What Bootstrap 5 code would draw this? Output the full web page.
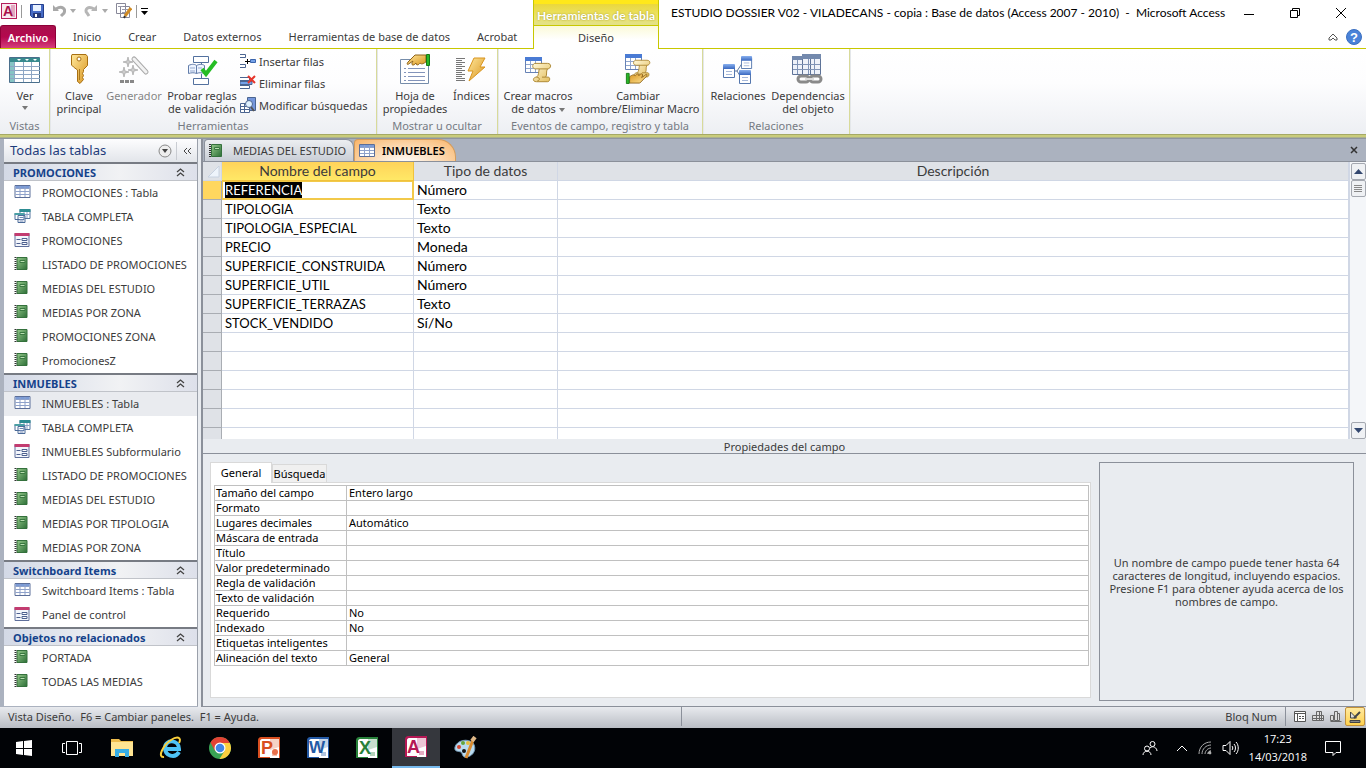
<!DOCTYPE html>
<html lang="es">
<head>
<meta charset="utf-8">
<meta name="viewport" content="width=device-width, initial-scale=1">
<title>ESTUDIO DOSSIER V02 - VILADECANS - Microsoft Access</title>
<link href="https://cdn.jsdelivr.net/npm/bootstrap@5.3.0/dist/css/bootstrap.min.css" rel="stylesheet">
<style>
:root{--olive:#c8c800;--edge:#8b909a;--cell:#d0d7e5;--blue:#1e3c7b;--ui:"Noto Sans","Open Sans",sans-serif;--grid:"Lato","Noto Sans",sans-serif}
body{font-family:var(--ui);font-size:11px;line-height:13px;color:#3b3b3b;height:100vh;overflow:hidden;background:#fff}
button{font:inherit;color:inherit;background:none;border:0;padding:0}
svg{display:block;flex:none}
.app-head{background:#fff;height:49px}
.head-left{width:533px}
.qat{height:25px;padding:0 0 3px 1px}
.sep{width:1px;height:13px;background:#999}
.tabs-row{height:23px}
.main-tabs{gap:27px}
.file-tab{width:56px;margin-right:-10px;height:23px;color:#fff;font-weight:600;background:linear-gradient(#a8104c,#b4084e 50%,#d63f7c);border:1px solid #8d0038;border-bottom:0;border-radius:3px 3px 0 0}
.rule{height:1px;background:var(--olive)}
.ctx{width:126px;border:solid var(--olive);border-width:0 1px}
.ctx-title{height:26px;padding-top:5px;border-top:4px solid #ffe81a;border-bottom:1px solid var(--olive);background:linear-gradient(#ead73c,#ece46a 60%,#e2e08a);color:#fff;font-family:Lato,sans-serif;font-size:12px;font-weight:700;text-shadow:0 0 2px #998f20}
.ctx-tab{height:23px;background:linear-gradient(#fbfad8,#fff 60%)}
.win-title{font-family:Lato,"Noto Sans",sans-serif;font-size:12px;color:#000;padding-left:12px}
.win-controls{gap:34px;padding-right:19px}
.ribbon{height:85px;background:linear-gradient(#fff,#fdfdfe 40%,#edeff3)}
.rgroup{border-right:1px solid #d8da9a;box-shadow:1px 0 #e4e7ea;height:85px}
.rgroup-name{color:#757a83;padding-top:2px}
.g-views{width:50px}.g-tools{width:327px}.g-show{width:121px}.g-events{width:205px}.g-rel{width:147px}
.big{height:68px;padding-top:4px;gap:4px;width:var(--w);white-space:nowrap}
.w50{--w:50px}.w55{--w:60px}.w70{--w:70px}.w76{--w:76px}.w80{--w:80px}.w120{--w:120px}
.small-btns{padding:1px 0 0}
.small-btns button{height:22px;gap:3px;white-space:nowrap}
.ribbon-end{height:5px;background:linear-gradient(#a5a965 0 1px,#c9cc7b 1px 3px,#8f96a0 4px)}
.main-area{background:#abb2bf;padding-left:4px;min-height:0}
.work{min-width:0}
.side{width:194px;background:#fff;border-right:1px solid #9aa0aa;margin-bottom:1px}
.side-head{height:23px;font-size:13px;color:var(--blue);background:linear-gradient(#fdfdfe,#e2e5ea);padding-left:6px}
.side-head .vsep{width:1px;height:18px;background:#c9ccd2}
.side-head .fold{width:20px}
.side h2{height:19px;margin:0;padding:0 12px 0 9px;font-size:11px;font-weight:700;line-height:15px;color:#15428b;background:linear-gradient(90deg,#d3d9e6,#f1f2f4 60%,#dde0ea);border-top:2px solid #777b83;border-bottom:1px solid #c0c3c9}
.side a{height:24px;color:#3b3b3b;text-decoration:none;padding:0 0 2px 10px;gap:11px}
.side a.on{background:#e9ebef}
.split{width:5px;background:#e9ecf0;border-right:2px solid var(--edge)}
.doc-tabs{height:23px;border-bottom:1px solid var(--edge);padding:0 8px 0 1px}
.doc-tab{height:22px;background:linear-gradient(#eceef1,#c9ced6);border:1px solid #8c929d;border-bottom:0;border-radius:4px 8px 0 0;padding:0 9px 0 4px;gap:8px;width:150px}
.doc-tab.on{width:102px;height:22px;background:radial-gradient(ellipse at 50% 110%,#fff,#fbd3a5 60%,#f9b468);border-color:#d59c5a;border-radius:4px 18px 0 0;font-weight:600;color:#000;gap:7px;padding-right:5px}
.grid-pane{min-height:0;overflow:hidden;background:#fff}
.design{table-layout:fixed;width:100%;font-family:var(--grid);font-size:14px;line-height:16px;color:#000;border-collapse:separate;border-spacing:0}
.design td:nth-child(2){font-size:13px}
.design th,.design td{height:19px;padding:0 3px;border-right:1px solid var(--cell);border-bottom:1px solid var(--cell);white-space:nowrap}
.design thead th{font-weight:400;text-align:center;color:#3b3b3b;background:#dfe2e7}
.design thead th.hot{background:linear-gradient(#ffd35a,#ffe866);border-color:#f0c23c}
.design tbody th{background:#dfe2e7;border-color:#a9adb3}
.design tbody th.hot{background:#ffd75f}
.design td.cur{box-shadow:inset 0 0 0 1px #f2c94a;border-color:#f2c94a}
.design td.cur span{background:#000;color:#fff}
.c-sel{width:19px}.c-name{width:192px}.c-type{width:144px}
.scroll{width:17px;background:#f4f6f9;border-left:1px solid var(--cell);padding-top:1px}
.scroll button{height:17px;width:15px;background:#eff1f4;border:1px solid #a4a8b0;border-radius:2px}
.props{background:#e9ecf0;border-bottom:1px solid var(--edge)}
.props-title{height:15px;line-height:15px;border-bottom:1px solid var(--edge)}
.props-body{padding:8px 12px 5px 7px;gap:8px;color:#000}
.ptabs button{background:#f0f0f0;border:1px solid #d9d9d9;border-bottom:0;height:18px;width:55px}
.ptabs .on{background:#fff;height:21px;width:62px;margin-bottom:-1px;z-index:1;padding-bottom:2px}
.page{border:1px solid #d9d9d9;background:#fff;padding:2px 1px 31px 3px;margin-bottom:3px}
.ptable{width:100%;table-layout:fixed;border-collapse:collapse;line-height:13px}
.ptable th,.ptable td{height:15px;padding:0 2px 1px;border:1px solid #c0c0c0;font-weight:400}
.ptable th{width:132px;padding-left:1px;white-space:nowrap}
.help{width:255px;border:1px solid var(--edge);padding:0 7px;color:#3b3b3b}
.status{height:21px;background:linear-gradient(#e8eaee,#b9bdc4);padding:0 1px 2px 8px}
.status .half{width:calc(50% - 6px)}
.status .vsep{width:1px;height:19px;background:#8b909a}
.views{gap:6px;padding-left:8px}
.views .on{width:20px;height:19px;margin-left:-3px;border:1px solid #c2913a;border-radius:2px;background:linear-gradient(#ffe9a0,#ffd24e)}
.taskbar{height:40px;background:#010306;color:#fff;font-size:11px}
.taskbar button{width:48px;height:40px}
.apps{gap:1px;margin-left:2px}
.apps .on{background:#35373d;border-bottom:2px solid #76b9ed}
.tray{gap:10px;padding-right:9px}
.tray .clock{font-family:"Open Sans","Noto Sans",sans-serif;line-height:18px;margin-right:-8px}
.logo-text{font-family:"Liberation Sans",sans-serif;font-weight:700}
</style>
</head>
<body class="d-flex flex-column">
<svg width="0" height="0" class="position-absolute" aria-hidden="true">
<defs>
<linearGradient id="gr" x1="0" y1="0" x2="1" y2="1"><stop stop-color="#94c98a"/><stop offset="1" stop-color="#2c6e36"/></linearGradient>
<linearGradient id="gold" x1="0" y1="0" x2="1" y2="1"><stop stop-color="#ffe79a"/><stop offset="1" stop-color="#d99520"/></linearGradient>
<linearGradient id="paper" x1="0" y1="0" x2="1" y2="1"><stop stop-color="#fff8d8"/><stop offset="1" stop-color="#e3bd5c"/></linearGradient>
<linearGradient id="blu" x1="0" y1="0" x2="0" y2="1"><stop stop-color="#88b0ee"/><stop offset="1" stop-color="#3a68c0"/></linearGradient>
<symbol id="i-table" viewBox="0 0 16 16"><path fill="#fff" stroke="#5b6e99" d="M.5 1.500h15v12H.5z"/><path fill="#7b9bd6" d="M1 2h14v2H1z"/><path stroke="#8fa2cb" d="M1 4.500h14M1 7.500h14M1 10.500h14M5.500 2v11M10.500 2v11"/></symbol>
<symbol id="i-query" viewBox="0 0 16 16"><path fill="#fff" stroke="#5577a0" d="M5.500 1.500h10v9h-10z"/><path fill="#2d8c92" d="M5 1h11v3H5z"/><path stroke="#8ba1c6" d="M6 6.500h9M9.500 4v5M12.500 4v6"/><path fill="#fff" stroke="#4a6a98" d="M.5 5.500h9v6h-9zM3.500 7.500h7v7h-7z"/><path fill="#4ba0a5" d="M0 5h10v2H0z"/><path stroke="#6c86b4" d="M5 9.500h4M5 11.500h4M5 13h4"/></symbol>
<symbol id="i-form" viewBox="0 0 16 16"><path fill="#f3f6fc" stroke="#5f6f9b" d="M.5 1.500h14v13H.5z"/><path fill="#c33c70" d="M0 1h15v3H0z"/><path fill="#fff" stroke="#4d608f" d="M7.500 6.500h5v2h-5zM7.500 10.500h5v2h-5zM2 7.500h4M2 11.500h4"/></symbol>
<symbol id="i-report" viewBox="0 0 16 16"><path fill="url(#gr)" stroke="#34713c" d="M2.500 1.500h10v12h-10z"/><path fill="#b8deb0" stroke="#397840" d="M5.500 4.500h5v2h-5z"/><path stroke="#333" stroke-width="2" stroke-dasharray="1 1" d="M1 1v13"/></symbol>
<symbol id="i-up" viewBox="0 0 9 9"><path fill="none" stroke="#444" stroke-width="1.300" d="M1 4l3.500-3L8 4M1 8l3.500-3L8 8"/></symbol>
<symbol id="i-key" viewBox="0 0 32 32"><path fill="url(#gold)" stroke="#a86f12" d="M9 1.500h14l1.500 2v9l-4 4v2l-1 2 1 2-1 2 1 2-3.500 4-2.500-2V17l-4-3-2-2V3z"/><circle cx="16" cy="6" r="2" fill="#fff" stroke="#a86f12"/><path stroke="#a87820" d="M16.500 16v11"/></symbol>
<symbol id="i-scroll" viewBox="0 0 22 24"><path fill="url(#paper)" stroke="#a8822c" d="M3 1.500h14c5 0 4 6 0 6-2 3 0 6-2 9h3c2 0 2 5-1 5H5c-5 0-4-5 0-5 3-2 2-6 3-9H4c-4 0-4-5-1-6z"/><path fill="none" stroke="#a8822c" d="M8 7.500h9M5 16.500c4 0 4 4 1 4M15 16.500h-4"/></symbol>
<symbol id="i-mini" viewBox="0 0 18 17"><path fill="#fff" stroke="#6681b5" d="M.5.500h16v15H.500z"/><path fill="#4a7bd4" d="M0 0h17v4H0z"/><path stroke="#91a7cf" d="M1 7.500h15M1 11.500h15M5.500 4v11M10.500 4v11"/></symbol>
<symbol id="i-db" viewBox="0 0 13 14"><path fill="#fff" stroke="#5476ad" d="M.5 2.500h11v11H.500z"/><rect width="12" height="5" rx="1" fill="url(#blu)"/><path stroke="#a6b8d9" d="M3 7.500h6M3 10.500h6"/></symbol>
<symbol id="i-hand" viewBox="0 0 24 13"><path fill="url(#gold)" stroke="#8f641b" d="M20 1H9L2 8c-2 3 0 3 2 1l3-2c-3 5 1 5 3 2 0 3 3 2 4 0 2 2 4 0 6-1z"/><path fill="#29b829" stroke="#167b16" d="M20.500.500h3v11h-3z"/></symbol>
<symbol id="i-page" viewBox="0 0 22 22"><path fill="currentColor" d="M4 0h18v21H0V4c0-3 1-4 4-4z"/><path fill="#fff" d="M4 2h17v18H2V4c0-1 1-2 2-2z"/><path fill="currentColor" fill-opacity=".25" d="M12 2h9v18h-9z"/><path fill="#fff" d="M12 13l9-3v11h-9z"/><path stroke="currentColor" stroke-width=".7" d="M14 16h5M14 18h5"/></symbol>
</defs>
</svg>

<header class="app-head d-flex flex-shrink-0">
 <div class="head-left flex-shrink-0">
  <div class="qat d-flex align-items-center">
   <svg width="16" height="16" viewBox="0 0 16 16"><rect x=".5" y=".5" width="15" height="15" fill="#f8e8ef" stroke="#b51e5b"/><rect x="10" y="2" width="4" height="12" fill="#e3a9c0"/><text class="logo-text" x="2" y="13" font-size="14" fill="#a80f4b">A</text></svg>
   <span class="sep ms-1 me-2"></span>
   <button aria-label="Guardar"><svg width="14" height="14" viewBox="0 0 14 14"><path fill="#476bc4" stroke="#243f8d" d="M.500.500h13v13h-11l-2-2z"/><path fill="#e9f2ff" d="M3 1h8v6H3z"/><path fill="#263977" d="M3 9h8v5H3z"/><path fill="#fff" d="M5 10h2v3H5z"/></svg></button>
   <button class="ms-2" aria-label="Deshacer"><svg width="14" height="14" viewBox="0 0 14 14" fill="none" stroke="#a8a8a8" stroke-width="3"><path d="M4 5c6-4 10 0 8 4l-3 3"/><path d="M1 1v6h6z" fill="#a8a8a8" stroke="none"/></svg></button>
   <svg class="ms-1" width="6" height="4"><path fill="#aaa" d="M0 0h6L3 4z"/></svg>
   <button class="ms-2" aria-label="Rehacer"><svg width="14" height="14" viewBox="0 0 14 14" fill="none" stroke="#b6b6b6" stroke-width="3"><path d="M10 5C4 1 0 6 3 9l2 3"/><path d="M13 1v6H7z" fill="#b6b6b6" stroke="none"/></svg></button>
   <svg class="ms-1" width="6" height="4"><path fill="#aaa" d="M0 0h6L3 4z"/></svg>
   <button class="ms-2" aria-label="Propiedades"><svg width="16" height="16" viewBox="0 0 16 16"><path fill="#fff" stroke="#889" d="M.500.500h9v10h-9zM4.500 3.500h9v11h-9z"/><path stroke="#99a" d="M2 3.500h5M6 6.500h6M6 9.500h5"/><path stroke="#cf8a23" stroke-width="3" d="M15 5l-6 8"/><path stroke="#333" stroke-width="2" d="M9 13l-1 2"/></svg></button>
   <span class="sep ms-1 me-1"></span>
   <svg width="8" height="8"><path d="M0 1h7v1H0zM0 4h7L3.500 8z"/></svg>
  </div>
  <nav class="tabs-row main-tabs d-flex align-items-center">
   <button class="file-tab">Archivo</button><button>Inicio</button><button>Crear</button><button>Datos externos</button><button>Herramientas de base de datos</button><button>Acrobat</button>
  </nav>
  <div class="rule"></div>
 </div>
 <div class="ctx flex-shrink-0 text-center">
  <div class="ctx-title text-nowrap">Herramientas de tabla</div>
  <button class="ctx-tab w-100">Diseño</button>
 </div>
 <div class="flex-grow-1">
  <div class="d-flex align-items-center justify-content-between qat p-0">
   <div class="win-title text-nowrap">ESTUDIO DOSSIER V02 - VILADECANS - copia : Base de datos (Access 2007 - 2010) &nbsp;-&nbsp; Microsoft Access</div>
   <div class="win-controls d-flex align-items-center">
    <button aria-label="Minimizar"><svg width="12" height="12"><path stroke="#000" d="M1 7.500h10"/></svg></button>
    <button aria-label="Restaurar"><svg width="12" height="12" fill="none" stroke="#000"><path d="M1.500 3.500h7v7h-7zM3.500 3V1.500h7v7H9"/></svg></button>
    <button aria-label="Cerrar"><svg width="12" height="12" stroke="#000"><path d="M1 1l10 10M11 1L1 11"/></svg></button>
   </div>
  </div>
  <div class="tabs-row d-flex justify-content-end align-items-center gap-2 pe-1">
   <button aria-label="Minimizar la cinta"><svg width="10" height="8" fill="#fff" stroke="#555"><path d="M1 5l4-4 4 4v2H7L5 5 3 7H1z"/></svg></button>
   <button aria-label="Ayuda"><svg width="16" height="16"><circle cx="8" cy="8" r="7.500" fill="#4a82d8" stroke="#3b70c0"/><text class="logo-text" x="4" y="13" font-size="13" fill="#fff">?</text></svg></button>
  </div>
  <div class="rule"></div>
 </div>
</header>

<section class="ribbon d-flex flex-shrink-0" aria-label="Diseño">
 <div class="rgroup g-views">
  <button class="big w50 d-flex flex-column align-items-center"><svg width="32" height="32" viewBox="0 0 32 32"><path fill="#fff" stroke="#4a6f8c" d="M.5 4.500h30v25H.500z"/><path fill="#398b8e" d="M1 5h30v4H1z"/><path fill="#86c4c4" d="M1 9h4v20H1z"/><path fill="#fff" d="M8 6h4l-2 2zM16 6h4l-2 2zM24 6h4l-2 2z"/><path stroke="#8ea6c4" d="M1 13.500h30M1 17.500h30M1 21.500h30M1 25.500h30M5.500 9v20M14.500 9v20M22.500 9v20"/></svg><span>Ver</span><svg width="6" height="4"><path fill="#777" d="M0 0h6L3 4z"/></svg></button>
  <div class="rgroup-name text-center">Vistas</div>
 </div>
 <div class="rgroup g-tools">
  <div class="d-flex ps-1">
   <button class="big w50 d-flex flex-column align-items-center"><svg width="32" height="32"><use href="#i-key"/></svg><span>Clave<br>principal</span></button>
   <button class="big w55 d-flex flex-column align-items-center text-black-50" disabled><svg width="32" height="32" viewBox="0 0 32 32"><path stroke="#aaa" stroke-width="5" stroke-linecap="round" d="M16 6l12 13"/><path stroke="#f2f2f2" stroke-width="3" stroke-linecap="round" d="M16 6l12 13"/><path fill="#ccc" stroke="#999" stroke-width=".6" d="M10 4l1 4 4 1-4 1-1 4-1-4-4-1 4-1zM6 14l1 4 4 1-4 1-1 4-1-4-4-1 4-1zM15 12l1 4 4 1-4 1-1 4-1-4-4-1 4-1z"/><path stroke="#888" stroke-width="3" stroke-dasharray="4 1" d="M2 28.500h14"/></svg><span>Generador</span></button>
   <button class="big w76 d-flex flex-column align-items-center"><svg width="32" height="32" viewBox="0 0 32 32"><path fill="#fff" stroke="#53719f" d="M7.500 3.500h15v6h-15zM7.500 25.500h15v6h-15zM15.500 10v2M15.500 21v4"/><path fill="#eef4ff" stroke="#627daa" d="M2.500 12.500c4-2 7-1 8 0 2-1 5-2 8 0v8c-3-1-6-1-8 0-2-1-5-1-8 0zM10.500 12.500v8"/><path stroke="#96abcf" d="M4 15h5M4 18h5M12 15h4"/><path fill="none" stroke="#25bd24" stroke-width="4" d="M16 16l4 5L30 8"/></svg><span>Probar reglas<br>de validación</span></button>
   <div class="small-btns d-flex flex-column">
    <button class="d-flex align-items-center"><svg width="16" height="16" fill="#fff" stroke="#4b6591"><path d="M0 1.500h5.500v3H0M0 11.500h5.500v3H0"/><path stroke="#000" d="M5 8.500h5M7.500 6v5"/><path fill="#75a2e8" stroke="#3b65ac" d="M10.500 6.500h5v3h-5z"/></svg>Insertar filas</button>
    <button class="d-flex align-items-center"><svg width="16" height="16" fill="#fff" stroke="#4b6591"><path d="M0 2.500h9.500v3H0M0 10.500h9.500v3H0"/><path fill="#75a2e8" d="M0 6.500h12v3H0z"/><path stroke="#e6352b" stroke-width="2" d="M8 1l7 7M15 1L8 8"/></svg>Eliminar filas</button>
    <button class="d-flex align-items-center"><svg width="16" height="16" fill="#fff" stroke="#4b6591"><path fill="#7597dc" d="M7.500.500h8v13h-8z"/><path d="M.500 6.500h9v9h-9zM1 9.500h8M1 12.500h8M4.500 7v8"/><circle cx="9" cy="7" r="3.500" fill="#dff1ff"/><path stroke="#555" stroke-width="2" d="M11 10l3 4"/></svg>Modificar búsquedas</button>
   </div>
  </div>
  <div class="rgroup-name text-center">Herramientas</div>
 </div>
 <div class="rgroup g-show">
  <div class="d-flex">
   <button class="big w76 d-flex flex-column align-items-center"><svg width="32" height="32" viewBox="0 0 32 32"><path fill="#fff" stroke="#758caa" d="M1.500 6.500h28v24h-28z"/><path stroke="#8394ba" stroke-dasharray="2 2 20 9" d="M5 15.500h21M5 19.500h21M5 23.500h21M5 27.500h21"/><use href="#i-hand" x="7" y="1" width="24" height="13"/></svg><span>Hoja de<br>propiedades</span></button>
   <button class="big d-flex flex-column align-items-center"><svg width="32" height="32" viewBox="0 0 32 32"><path stroke="#777" d="M1 5.500h9M1 7.500h6M1 9.500h9M1 11.500h6M1 13.500h9M1 15.500h6M1 17.500h9M1 19.500h6M1 21.500h9M1 23.500h6M1 25.500h9M1 27.500h9"/><path fill="url(#gold)" stroke="#d9951f" d="M19 5h11l-5 9h5L14 28l4-10h-5z"/></svg><span>Índices</span></button>
  </div>
  <div class="rgroup-name text-center">Mostrar u ocultar</div>
 </div>
 <div class="rgroup g-events">
  <div class="d-flex">
   <button class="big w80 d-flex flex-column align-items-center"><svg width="32" height="32" viewBox="0 0 32 32"><use href="#i-mini" x="3" y="4" width="18" height="17"/><use href="#i-scroll" x="9" y="9" width="22" height="22"/></svg><span>Crear macros<br>de datos <svg class="d-inline" width="6" height="4"><path fill="#777" d="M0 0h6L3 4z"/></svg></span></button>
   <button class="big w120 d-flex flex-column align-items-center"><svg width="32" height="32" viewBox="0 0 32 32"><use href="#i-mini" x="3" y="1" width="18" height="17"/><use href="#i-scroll" x="10" y="6" width="20" height="20"/><g transform="rotate(180 15 25)"><use href="#i-hand" x="3" y="19" width="24" height="12"/></g></svg><span>Cambiar<br>nombre/Eliminar Macro</span></button>
  </div>
  <div class="rgroup-name text-center">Eventos de campo, registro y tabla</div>
 </div>
 <div class="rgroup g-rel">
  <div class="d-flex">
   <button class="big w70 d-flex flex-column align-items-center"><svg width="32" height="32" viewBox="0 0 32 32"><path fill="none" stroke="#61799f" d="M12 18h3l6-9M15 18l5 8"/><use href="#i-db" x="1" y="11" width="13" height="14"/><use href="#i-db" x="19" y="3" width="12" height="13"/><use href="#i-db" x="17" y="17" width="13" height="14"/></svg><span>Relaciones</span></button>
   <button class="big w70 d-flex flex-column align-items-center"><svg width="32" height="32" viewBox="0 0 32 32"><path fill="#eef2fa" stroke="#5e7398" d="M.500 3.500h18v18h-18zM10.500 1.500h18v20h-18z"/><path fill="#7389ad" d="M0 3h10v4H0zM10 1h19v5H10z"/><path stroke="#8094b7" d="M1 11.500h27M1 16.500h27M5.500 7v14M16.500 6v15M22.500 6v15"/><g fill="none" stroke="#8a8a8a" stroke-width="3"><rect x="6" y="23" width="11" height="6" rx="3"/><rect x="18" y="23" width="11" height="6" rx="3"/></g><path stroke="#ddd" stroke-width="2" d="M13 26h9"/></svg><span>Dependencias<br>del objeto</span></button>
  </div>
  <div class="rgroup-name text-center">Relaciones</div>
 </div>
</section>
<div class="ribbon-end flex-shrink-0"></div>

<main class="main-area d-flex flex-grow-1">
 <aside class="side flex-shrink-0">
  <div class="side-head d-flex align-items-center"><span class="flex-grow-1">Todas las tablas</span>
   <button class="me-1" aria-label="Filtrar"><svg width="14" height="14"><circle cx="7" cy="7" r="6" fill="#eee" stroke="#888"/><path fill="#444" d="M4 5h6L7 9z"/></svg></button><span class="vsep"></span>
   <button class="fold d-flex justify-content-center" aria-label="Contraer"><svg width="9" height="8" fill="none" stroke="#444"><path d="M4 1L1 4l3 3M8 1L5 4l3 3"/></svg></button></div>
  <h2 class="d-flex justify-content-between align-items-center">PROMOCIONES<svg width="9" height="9"><use href="#i-up"/></svg></h2>
  <a href="#" class="d-flex align-items-center"><svg width="17" height="16"><use href="#i-table"/></svg>PROMOCIONES : Tabla</a>
  <a href="#" class="d-flex align-items-center"><svg width="17" height="16"><use href="#i-query"/></svg>TABLA COMPLETA</a>
  <a href="#" class="d-flex align-items-center"><svg width="17" height="16"><use href="#i-form"/></svg>PROMOCIONES</a>
  <a href="#" class="d-flex align-items-center"><svg width="17" height="16"><use href="#i-report"/></svg>LISTADO DE PROMOCIONES</a>
  <a href="#" class="d-flex align-items-center"><svg width="17" height="16"><use href="#i-report"/></svg>MEDIAS DEL ESTUDIO</a>
  <a href="#" class="d-flex align-items-center"><svg width="17" height="16"><use href="#i-report"/></svg>MEDIAS POR ZONA</a>
  <a href="#" class="d-flex align-items-center"><svg width="17" height="16"><use href="#i-report"/></svg>PROMOCIONES ZONA</a>
  <a href="#" class="d-flex align-items-center"><svg width="17" height="16"><use href="#i-report"/></svg>PromocionesZ</a>
  <h2 class="d-flex justify-content-between align-items-center">INMUEBLES<svg width="9" height="9"><use href="#i-up"/></svg></h2>
  <a href="#" class="on d-flex align-items-center"><svg width="17" height="16"><use href="#i-table"/></svg>INMUEBLES : Tabla</a>
  <a href="#" class="d-flex align-items-center"><svg width="17" height="16"><use href="#i-query"/></svg>TABLA COMPLETA</a>
  <a href="#" class="d-flex align-items-center"><svg width="17" height="16"><use href="#i-form"/></svg>INMUEBLES Subformulario</a>
  <a href="#" class="d-flex align-items-center"><svg width="17" height="16"><use href="#i-report"/></svg>LISTADO DE PROMOCIONES</a>
  <a href="#" class="d-flex align-items-center"><svg width="17" height="16"><use href="#i-report"/></svg>MEDIAS DEL ESTUDIO</a>
  <a href="#" class="d-flex align-items-center"><svg width="17" height="16"><use href="#i-report"/></svg>MEDIAS POR TIPOLOGIA</a>
  <a href="#" class="d-flex align-items-center"><svg width="17" height="16"><use href="#i-report"/></svg>MEDIAS POR ZONA</a>
  <h2 class="d-flex justify-content-between align-items-center">Switchboard Items<svg width="9" height="9"><use href="#i-up"/></svg></h2>
  <a href="#" class="d-flex align-items-center"><svg width="17" height="16"><use href="#i-table"/></svg>Switchboard Items : Tabla</a>
  <a href="#" class="d-flex align-items-center"><svg width="17" height="16"><use href="#i-form"/></svg>Panel de control</a>
  <h2 class="d-flex justify-content-between align-items-center">Objetos no relacionados<svg width="9" height="9"><use href="#i-up"/></svg></h2>
  <a href="#" class="d-flex align-items-center"><svg width="17" height="16"><use href="#i-report"/></svg>PORTADA</a>
  <a href="#" class="d-flex align-items-center"><svg width="17" height="16"><use href="#i-report"/></svg>TODAS LAS MEDIAS</a>
 </aside>
 <div class="split flex-shrink-0"></div>
 <div class="work flex-grow-1 d-flex flex-column">
  <div class="doc-tabs d-flex align-items-center flex-shrink-0">
   <button class="doc-tab d-flex align-items-center text-nowrap"><svg width="16" height="16"><use href="#i-report"/></svg>MEDIAS DEL ESTUDIO</button>
   <button class="doc-tab on d-flex align-items-center"><svg width="16" height="16"><use href="#i-table"/></svg>INMUEBLES</button>
   <button class="ms-auto" aria-label="Cerrar"><svg width="8" height="8" stroke="#333" stroke-width="1.500"><path d="M1 1l6 6M7 1L1 7"/></svg></button>
  </div>
  <div class="grid-pane d-flex flex-grow-1">
   <div class="flex-grow-1 overflow-hidden">
   <table class="design">
    <colgroup><col class="c-sel"><col class="c-name"><col class="c-type"><col></colgroup>
    <thead><tr><th class="p-0"><svg width="18" height="18"><path fill="#eef4fb" stroke="#c8d2e0" d="M16 4v11H5z"/></svg></th><th class="hot">Nombre del campo</th><th>Tipo de datos</th><th>Descripción</th></tr></thead>
    <tbody>
    <tr><th class="hot"></th><td class="cur"><span>REFERENCIA</span></td><td>Número</td><td></td></tr>
    <tr><th></th><td>TIPOLOGIA</td><td>Texto</td><td></td></tr>
    <tr><th></th><td>TIPOLOGIA_ESPECIAL</td><td>Texto</td><td></td></tr>
    <tr><th></th><td>PRECIO</td><td>Moneda</td><td></td></tr>
    <tr><th></th><td>SUPERFICIE_CONSTRUIDA</td><td>Número</td><td></td></tr>
    <tr><th></th><td>SUPERFICIE_UTIL</td><td>Número</td><td></td></tr>
    <tr><th></th><td>SUPERFICIE_TERRAZAS</td><td>Texto</td><td></td></tr>
    <tr><th></th><td>STOCK_VENDIDO</td><td>Sí/No</td><td></td></tr>
    <tr><th></th><td></td><td></td><td></td></tr>
    <tr><th></th><td></td><td></td><td></td></tr>
    <tr><th></th><td></td><td></td><td></td></tr>
    <tr><th></th><td></td><td></td><td></td></tr>
    <tr><th></th><td></td><td></td><td></td></tr>
    <tr><th></th><td></td><td></td><td></td></tr>
    </tbody>
   </table>
   </div>
   <div class="scroll d-flex flex-column align-items-center flex-shrink-0">
    <button class="d-flex align-items-center justify-content-center" aria-label="Subir"><svg width="9" height="5"><path fill="#33476f" d="M0 5h9L4.500 0z"/></svg></button>
    <button class="d-flex align-items-center justify-content-center" aria-label="Desplazar"><svg width="8" height="8" stroke="#888"><path d="M0 .500h8M0 2.500h8M0 4.500h8M0 6.500h8"/></svg></button>
    <button class="mt-auto d-flex align-items-center justify-content-center" aria-label="Bajar"><svg width="9" height="5"><path fill="#33476f" d="M0 0h9L4.500 5z"/></svg></button>
   </div>
  </div>
  <section class="props flex-shrink-0">
   <div class="props-title text-center">Propiedades del campo</div>
   <div class="props-body d-flex">
    <div class="flex-grow-1">
     <div class="ptabs d-flex align-items-end"><button class="on position-relative">General</button><button>Búsqueda</button></div>
     <div class="page">
      <table class="ptable">
       <tr><th scope="row">Tamaño del campo</th><td>Entero largo</td></tr>
       <tr><th scope="row">Formato</th><td></td></tr>
       <tr><th scope="row">Lugares decimales</th><td>Automático</td></tr>
       <tr><th scope="row">Máscara de entrada</th><td></td></tr>
       <tr><th scope="row">Título</th><td></td></tr>
       <tr><th scope="row">Valor predeterminado</th><td></td></tr>
       <tr><th scope="row">Regla de validación</th><td></td></tr>
       <tr><th scope="row">Texto de validación</th><td></td></tr>
       <tr><th scope="row">Requerido</th><td>No</td></tr>
       <tr><th scope="row">Indexado</th><td>No</td></tr>
       <tr><th scope="row">Etiquetas inteligentes</th><td></td></tr>
       <tr><th scope="row">Alineación del texto</th><td>General</td></tr>
      </table>
     </div>
    </div>
    <div class="help flex-shrink-0 d-flex align-items-center text-center">Un nombre de campo puede tener hasta 64 caracteres de longitud, incluyendo espacios. Presione F1 para obtener ayuda acerca de los nombres de campo.</div>
   </div>
  </section>
 </div>
</main>

<footer class="status d-flex align-items-center flex-shrink-0">
 <span class="half">Vista Diseño.&nbsp; F6 = Cambiar paneles.&nbsp; F1 = Ayuda.</span><span class="vsep"></span>
 <span class="ms-auto me-2">Bloq Num</span><span class="vsep"></span>
 <div class="views d-flex align-items-center">
  <button aria-label="Vista Hoja de datos"><svg width="12" height="11" fill="#fff" stroke="#555"><path d="M.500.500h11v10H.500zM1 2.500h10M3.500 3v7M5 5.500h2M8 5.500h2M5 7.500h2M8 7.500h2"/></svg></button>
  <button aria-label="Vista Tabla dinámica"><svg width="12" height="11" fill="#ddd" stroke="#666"><path d="M.500 4.500h11v5H.500zM4.500.500h5v9h-5zM1 7.500h10M7.500 1v9"/></svg></button>
  <button aria-label="Vista Gráfico dinámico"><svg width="12" height="11" fill="#ddd" stroke="#666"><path d="M.500 9.500v-5h3v5zM4.500 9.500v-9h3v9zM7.500 9.500v-7h2v7zM.500 10.500h11"/></svg></button>
  <button class="on d-flex align-items-center justify-content-center" aria-label="Vista Diseño"><svg width="12" height="12" stroke="#444"><path fill="#ddd" d="M1.500 1v6h6z"/><path stroke-width="2" d="M11 1L5 7"/><path fill="#888" d="M1 9.500h10v2H1z"/></svg></button>
 </div>
</footer>

<nav class="taskbar d-flex align-items-center flex-shrink-0">
 <button class="d-flex align-items-center justify-content-center" aria-label="Inicio"><svg width="16" height="16" fill="#fff"><path d="M0 2l7-1v7H0zM8 1l8-1v8H8zM0 9h7v6l-7-1zM8 9h8v7l-8-1z"/></svg></button>
 <button class="d-flex align-items-center justify-content-center" aria-label="Vista de tareas"><svg width="20" height="16" fill="none" stroke="#fff"><path d="M4.500 1.500h11v13h-11zM3 3.500H.500v9H3M17 3.500h2.500v9H17"/></svg></button>
 <div class="apps d-flex">
  <button class="d-flex align-items-center justify-content-center" aria-label="Explorador"><svg width="22" height="20" viewBox="0 0 22 20"><path fill="#eebd4d" d="M0 1h8l2 2h12v15H0z"/><path fill="#ffe592" d="M0 4h22v14H0z"/><path fill="#38aee5" d="M4 19v-8h14v8h-4v-4H8v4z"/></svg></button>
  <button class="d-flex align-items-center justify-content-center" aria-label="Internet Explorer"><svg width="24" height="24" viewBox="0 0 24 24" fill="none"><path stroke="#4ec3f5" stroke-width="4" d="M20 16c-4 7-14 4-14-4 0-9 14-9 14 1H7"/><path stroke="#fbd03a" stroke-width="2" d="M5 21c-7 1-1-12 7-17 6-4 11-3 8 3"/></svg></button>
  <button class="d-flex align-items-center justify-content-center" aria-label="Chrome"><svg width="22" height="22" viewBox="0 0 22 22"><circle cx="11" cy="11" r="11" fill="#39a355"/><path fill="#fccf3f" d="M11 6h9.800A11 11 0 0 1 10.500 22l5-8z"/><path fill="#e34234" d="M1.500 5.500A11 11 0 0 1 20.800 6H11l-5 8z"/><circle cx="11" cy="11" r="5.500" fill="#fff"/><circle cx="11" cy="11" r="4.300" fill="#4285e8"/></svg></button>
  <button class="d-flex align-items-center justify-content-center" aria-label="PowerPoint"><svg width="22" height="22" color="#d94f20"><use href="#i-page"/><text class="logo-text" x="3" y="17" font-size="18" fill="#d94f20">P</text><circle cx="17" cy="15" r="3" fill="#e8704b"/></svg></button>
  <button class="d-flex align-items-center justify-content-center" aria-label="Word"><svg width="22" height="22" color="#245aa5"><use href="#i-page"/><text class="logo-text" x="2" y="16" font-size="17" fill="#245aa5">W</text></svg></button>
  <button class="d-flex align-items-center justify-content-center" aria-label="Excel"><svg width="22" height="22" color="#28813a"><use href="#i-page"/><text class="logo-text" x="3" y="17" font-size="18" fill="#28813a">X</text></svg></button>
  <button class="on d-flex align-items-center justify-content-center" aria-label="Access"><svg width="22" height="22" color="#b51855"><use href="#i-page"/><text class="logo-text" x="2" y="17" font-size="18" fill="#b51855">A</text></svg></button>
  <button class="d-flex align-items-center justify-content-center" aria-label="Paint"><svg width="24" height="24" viewBox="0 0 24 24"><path fill="#b9dbf0" stroke="#7399b5" d="M2 11C4 4 15 2 20 7c4 5 1 13-6 14-5 1-4-3-6-5-3-1-7 0-6-5z"/><circle cx="6" cy="11" r="2" fill="#d54732"/><circle cx="10" cy="7" r="2" fill="#65a53b"/><circle cx="15" cy="7" r="2" fill="#e8bd3c"/><circle cx="11" cy="15" r="2" fill="#111"/><path stroke="#d88b31" stroke-width="3" d="M20 4l-7 18"/><path stroke="#deb787" stroke-width="4" d="M22 1l-3 4"/></svg></button>
 </div>
 <div class="tray ms-auto d-flex align-items-center">
  <svg class="me-2" width="16" height="16" fill="none" stroke="#fff"><circle cx="10.500" cy="4" r="2.500"/><circle cx="5" cy="8.500" r="2.500"/><path d="M1 15c0-5 8-5 8 0M8 8c3-3 7 0 7 3"/></svg>
  <svg width="12" height="16" fill="none" stroke="#fff"><path d="M1 11l5-5 5 5"/></svg>
  <svg width="14" height="14" fill="none" stroke="#aaa"><path d="M1 13C1 6 6 1 13 1M4 13c0-5 4-9 9-9M7 13c0-3 3-6 6-6"/><path stroke="#fff" d="M10 13c0-2 1-3 3-3"/><circle cx="12" cy="12" r="1" fill="#fff"/></svg>
  <svg width="17" height="16" fill="none" stroke="#fff"><path d="M1 5.500h3l4-4v13l-4-4H1zM10 6c1 1 1 3 0 4M12 4c2 2 2 6 0 8M14 2c3 3 3 9 0 12"/></svg>
  <div class="clock text-center">17:23<br>14/03/2018</div>
  <button aria-label="Centro de actividades"><svg class="mx-auto" width="16" height="16" fill="none" stroke="#fff"><path d="M.500 1.500h15v11H11l-3 3v-3H.500z"/></svg></button>
 </div>
</nav>
<script src="https://cdn.jsdelivr.net/npm/bootstrap@5.3.0/dist/js/bootstrap.bundle.min.js"></script>
</body>
</html>
